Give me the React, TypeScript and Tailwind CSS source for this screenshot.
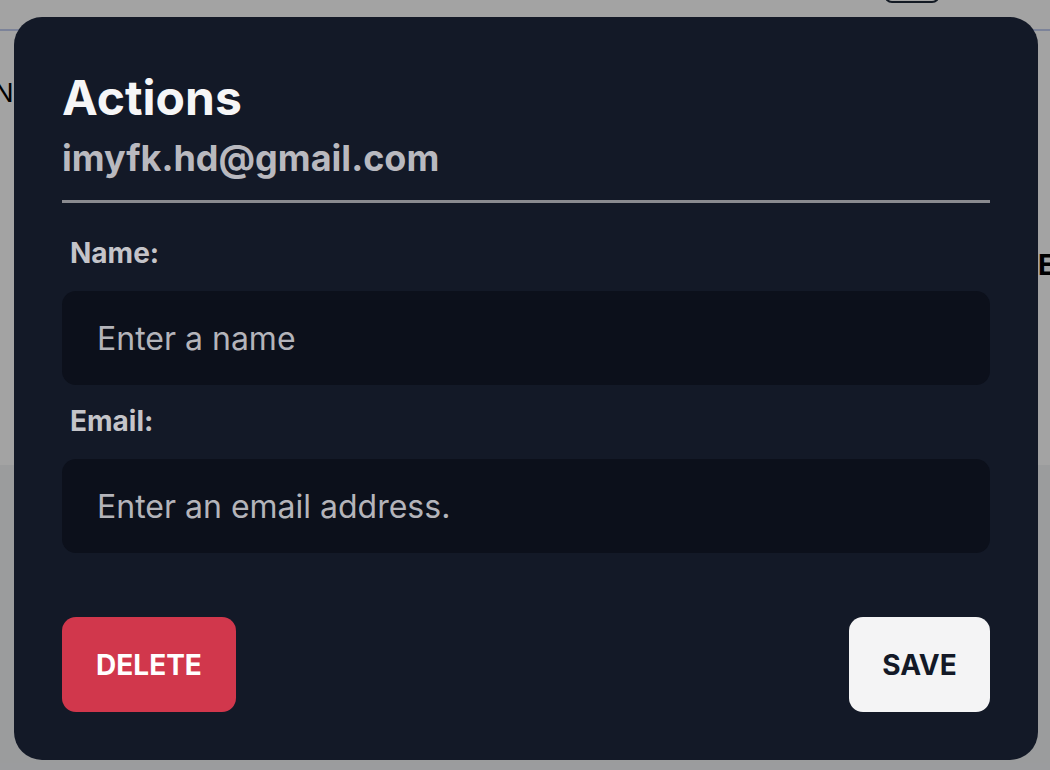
import React, { useState } from 'react';

export default function App() {
  const [name, setName] = useState('');
  const [email, setEmail] = useState('');

  return (
    <div className="relative w-[1050px] h-[770px] overflow-hidden bg-gray-100" style={{ fontFamily: 'Inter, "Noto Sans", sans-serif' }}>
      {/* page behind the dialog */}
      <div className="h-[465px] bg-white">
        <div className="h-[31px] border-b-2 border-[#c3cdf0] flex justify-end pr-[110px]">
          <div className="w-[56px] h-[36px] -mt-[33px] rounded-lg border-2 border-gray-800"></div>
        </div>
        <div className="flex pt-[42px]">
          <span className="-ml-[6px] text-[26px] text-black">Notes</span>
        </div>
        <div className="flex justify-end pt-[132px]">
          <span className="text-[28px] font-bold text-black -mr-[26px] w-[38px] whitespace-nowrap">EDIT</span>
        </div>
      </div>

      {/* backdrop */}
      <div className="absolute inset-0 bg-black/[0.36]"></div>

      {/* dialog */}
      <div className="absolute left-[14px] top-[17px] w-[1024px] h-[743px] rounded-[28px] bg-[#131927] px-[48px] pt-[57px] pb-[48px] flex flex-col">
        <h1 className="text-[48px] leading-[48px] font-bold text-[#f6f6f7]">Actions</h1>
        <p className="mt-[16px] text-[36px] leading-[40px] font-bold text-[#b9b9bf]">imyfk.hd@gmail.com</p>
        <div className="mt-[22px] h-[3px] bg-[#8a8b90]"></div>

        <label className="mt-[34px] ml-[8px] text-[28px] leading-[32px] font-bold text-[#c4c4c9]">Name:</label>
        <input
          value={name}
          onChange={(e) => setName(e.target.value)}
          placeholder="Enter a name"
          className="mt-[22px] h-[94px] w-full rounded-[14px] bg-[#0c101b] px-[35px] text-[32px] text-[#b4b4ba] placeholder:text-[#b4b4ba] outline-none"
        />

        <label className="mt-[20px] ml-[8px] text-[28px] leading-[32px] font-bold text-[#c4c4c9]">Email:</label>
        <input
          value={email}
          onChange={(e) => setEmail(e.target.value)}
          placeholder="Enter an email address."
          className="mt-[22px] h-[94px] w-full rounded-[14px] bg-[#0c101b] px-[35px] text-[32px] text-[#b4b4ba] placeholder:text-[#b4b4ba] outline-none"
        />

        <div className="mt-auto flex justify-between items-end">
          <button className="w-[174px] h-[95px] rounded-[14px] bg-[#d1374c] text-white text-[28px] font-bold">
            DELETE
          </button>
          <button className="w-[141px] h-[95px] rounded-[14px] bg-[#f4f4f5] text-[#131927] text-[28px] font-bold">
            SAVE
          </button>
        </div>
      </div>
    </div>
  );
}
